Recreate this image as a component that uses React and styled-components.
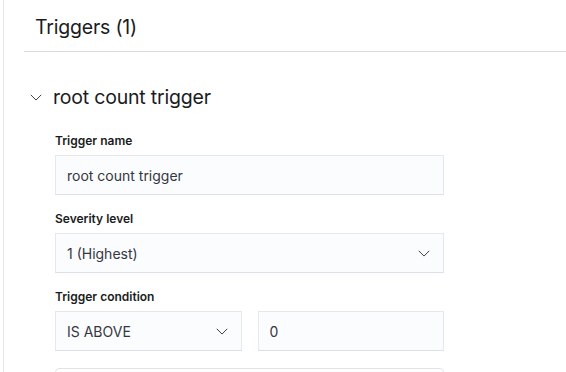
import React from "react";
import styled, { createGlobalStyle } from "styled-components";

const GlobalStyle = createGlobalStyle`
  body {
    margin: 0;
    background: #fff;
    font-family: Inter, "Noto Sans", sans-serif;
    color: #1a1c21;
  }
`;

const Panel = styled.div`
  margin-left: 3px;
  border-left: 1px solid #e4e6ee;
  padding-left: 20px;
  height: 372px;
  overflow: hidden;
`;

const PanelHeader = styled.div`
  height: 49px;
  padding-top: 2px;
  border-bottom: 1px solid #d3dae6;
  display: flex;
  align-items: center;
  padding-left: 11px;
`;

const Title = styled.h2`
  margin: 0;
  font-size: 19.5px;
  font-weight: 400;
  letter-spacing: -0.2px;
`;

const Accordion = styled.div`
  padding: 32px 0 0 5px;
`;

const AccordionButton = styled.div`
  display: flex;
  align-items: center;
  gap: 10px;
  height: 26px;
`;

const AccordionTitle = styled.span`
  font-size: 19.5px;
  font-weight: 400;
  letter-spacing: -0.2px;
`;

const Form = styled.div`
  padding: 23px 0 0 26px;
  width: 389px;
  display: flex;
  flex-direction: column;
  gap: 16px;
`;

const Field = styled.div`
  display: flex;
  flex-direction: column;
  gap: 6px;
`;

const Label = styled.label`
  font-size: 12px;
  font-weight: 600;
  line-height: 16px;
`;

const Control = styled.div`
  height: 40px;
  box-sizing: border-box;
  display: flex;
  align-items: center;
  justify-content: space-between;
  padding: 0 12px 0 11px;
  background: #fbfcfd;
  border: 1px solid #e6e8f0;
  border-bottom-color: #dcdfe8;
  font-size: 14px;
  color: #343741;
  flex: ${(p) => (p.$grow ? 1 : "none")};
`;

const Row = styled.div`
  display: flex;
  gap: 16px;
`;

const NextBox = styled.div`
  margin-top: 11px;
  height: 20px;
  border: 1px solid #e0e3ea;
  border-radius: 4px;
`;

const Chevron = ({ size = 14 }) => (
  <svg width={size} height={size} viewBox="0 0 16 16" fill="none">
    <path d="M2 5.5l6 6 6-6" stroke="#343741" strokeWidth="1.1" />
  </svg>
);

export default function App() {
  return (
    <>
      <GlobalStyle />
      <Panel>
        <PanelHeader>
          <Title>Triggers (1)</Title>
        </PanelHeader>
        <Accordion>
          <AccordionButton>
            <Chevron />
            <AccordionTitle>root count trigger</AccordionTitle>
          </AccordionButton>
          <Form>
            <Field>
              <Label>Trigger name</Label>
              <Control>root count trigger</Control>
            </Field>
            <Field>
              <Label>Severity level</Label>
              <Control>
                1 (Highest)
                <Chevron />
              </Control>
            </Field>
            <Field>
              <Label>Trigger condition</Label>
              <Row>
                <Control $grow>
                  IS ABOVE
                  <Chevron />
                </Control>
                <Control $grow>0</Control>
              </Row>
              <NextBox />
            </Field>
          </Form>
        </Accordion>
      </Panel>
    </>
  );
}
